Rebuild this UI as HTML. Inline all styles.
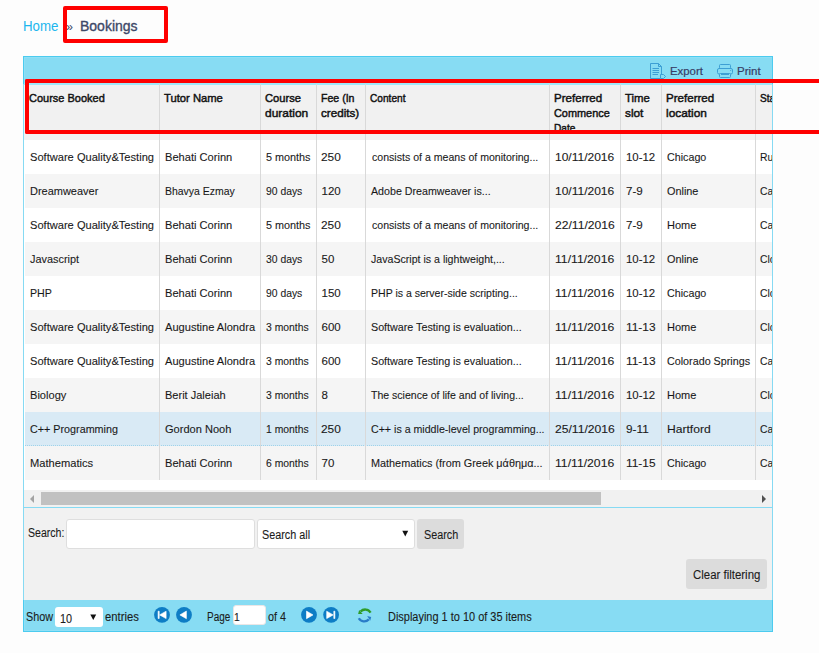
<!DOCTYPE html>
<html><head><meta charset="utf-8">
<style>
*{box-sizing:border-box;margin:0;padding:0}
html,body{width:819px;height:653px;overflow:hidden;background:#fdfdfd;font-family:"Liberation Sans",sans-serif;color:#1c1c1c;position:relative}
.a{position:absolute;white-space:nowrap}
.t{position:absolute;white-space:nowrap;transform-origin:0 0;-webkit-text-stroke:0.1px #111}
#rb1{left:63px;top:6px;width:105px;height:37px;border:4px solid #f00;border-radius:2px}
#grid{left:23px;top:56px;width:750px;height:576px;border:1px solid #86daf3;background:#f1f1f1}
#toolbar{left:23px;top:56px;width:750px;height:28px;background:#87dcf3;border:1px solid #4ccbef;border-bottom:none;box-shadow:inset 1px 1px 0 #8fe0f6}
#tbline{left:24px;top:83px;width:748px;height:2px;background:#9fe8fa}
#thead{left:24px;top:84px;width:748px;height:56px;background:#f1f1f1}
#tbody{left:24px;top:140px;width:748px;height:350px;background:#fff}
.row{position:absolute;left:25px;width:747px;height:34px}
.row.alt{background:#f5f5f5}
.row.sel{background:#d9eaf5;border-bottom:1px dotted #9fd3ea}
.vl{position:absolute;top:84px;width:1px;height:396px;background:#d9d9d9}
#clipR{left:773px;top:84px;width:46px;height:406px;background:#fdfdfd}
#rborder{left:772px;top:84px;width:1px;height:516px;background:#86daf3}
#rb2{left:25px;top:79px;width:820px;height:55px;border:4px solid #f00;border-right:none;border-radius:2px 0 0 2px}
#sbtrack{left:24px;top:490px;width:748px;height:17px;background:#f1f1f1}
#sbthumb{left:41px;top:492px;width:560px;height:13px;background:#c1c1c1}
#sbline{left:24px;top:507px;width:748px;height:1px;background:#86daf3}
.arrL{left:30px;top:495px;width:0;height:0;border-top:4px solid transparent;border-bottom:4px solid transparent;border-right:4px solid #a3a3a3}
.arrR{left:762px;top:495px;width:0;height:0;border-top:4px solid transparent;border-bottom:4px solid transparent;border-left:4px solid #505050}
#sinput{left:66px;top:519px;width:189px;height:30px;background:#fff;border:1px solid #dedede;border-radius:3px}
#ssel{left:257px;top:519px;width:158px;height:30px;background:#fff;border:1px solid #dedede;border-radius:3px}
#sbtn{left:417px;top:519px;width:47px;height:30px;background:#dcdcdc;border-radius:3px}
#cbtn{left:686px;top:559px;width:81px;height:30px;background:#dcdcdc;border-radius:3px}
#footer{left:23px;top:600px;width:750px;height:32px;background:#87dcf3;border:1px solid #4ccbef;border-top:none;box-shadow:inset 1px -1px 0 #8fe0f6}
#showsel{left:55px;top:607px;width:48px;height:20px;background:#fff;border-radius:3px}
#pginput{left:233px;top:605px;width:33px;height:20px;background:#fff;border:1px solid #ebe6e6;border-radius:3px}
</style></head><body>
<div class="t" style="left:23px;top:19px;font-size:14.5px;line-height:14.5px;color:#1cb6ee;-webkit-text-stroke:0;transform:scaleX(0.915)">Home</div>
<div class="t" style="left:66px;top:20px;font-size:12.5px;line-height:14px;color:#3b4a6b;-webkit-text-stroke:0">»</div>
<div class="t" style="left:80px;top:19px;font-size:14.5px;line-height:14.5px;color:#3d4868;-webkit-text-stroke:0.35px #3d4868;transform:scaleX(0.965)">Bookings</div>
<div id="rb1" class="a"></div>

<div id="grid" class="a"></div>
<div id="toolbar" class="a"></div>

<div class="t" style="left:670px;top:65px;font-size:11.5px;line-height:12px;color:#383d66;-webkit-text-stroke:0.2px #383d66;transform:scaleX(0.99)">Export</div>
<div class="t" style="left:737px;top:65px;font-size:11.5px;line-height:12px;color:#383d66;-webkit-text-stroke:0.2px #383d66;transform:scaleX(1.0)">Print</div>
<svg class="a" style="left:648px;top:62px" width="20" height="18" viewBox="0 0 20 18">
 <path d="M12 16.5 H2.5 V1.5 H10.5 L13.5 4.5 V12" fill="none" stroke="#3d9fd4" stroke-width="1"/>
 <path d="M10.5 1.5 V4.5 H13.5" fill="none" stroke="#3d9fd4" stroke-width="1"/>
 <path d="M4.5 6.5H11 M4.5 8.5H11 M4.5 10.5H11 M4.5 12.5H10" stroke="#3d9fd4" stroke-width="1"/>
 <path d="M12.5 12.5 H15.5 L17.5 14.5 L15.5 16.5 H12.5 Z" fill="#87dcf3" stroke="#3d9fd4" stroke-width="1"/>
</svg>
<svg class="a" style="left:716px;top:63px" width="18" height="16" viewBox="0 0 18 16">
 <rect x="3.5" y="1.5" width="11" height="4" rx="1" fill="none" stroke="#3d9fd4" stroke-width="1"/>
 <rect x="1.5" y="5.5" width="15" height="5.5" rx="1.5" fill="#87dcf3" stroke="#3d9fd4" stroke-width="1"/>
 <rect x="3.5" y="10.5" width="11" height="4" rx="1" fill="#87dcf3" stroke="#3d9fd4" stroke-width="1"/>
 <path d="M5 11.5H13" stroke="#3d9fd4" stroke-width="1"/>
 <circle cx="14.7" cy="7.5" r="0.6" fill="#3d9fd4"/>
</svg>

<div id="thead" class="a"></div>
<div id="tbline" class="a"></div>
<div id="tbody" class="a"></div>
<div class="vl" style="left:159px"></div>
<div class="vl" style="left:260px"></div>
<div class="vl" style="left:316px"></div>
<div class="vl" style="left:365px"></div>
<div class="vl" style="left:549px"></div>
<div class="vl" style="left:620px"></div>
<div class="vl" style="left:661px"></div>
<div class="vl" style="left:755px"></div>
<div class="row" style="top:140px"></div>
<div class="row alt" style="top:174px"></div>
<div class="row" style="top:208px"></div>
<div class="row alt" style="top:242px"></div>
<div class="row" style="top:276px"></div>
<div class="row alt" style="top:310px"></div>
<div class="row" style="top:344px"></div>
<div class="row alt" style="top:378px"></div>
<div class="row sel" style="top:412px"></div>
<div class="row alt" style="top:446px"></div>
<div class="vl" style="left:159px"></div>
<div class="vl" style="left:260px"></div>
<div class="vl" style="left:316px"></div>
<div class="vl" style="left:365px"></div>
<div class="vl" style="left:549px"></div>
<div class="vl" style="left:620px"></div>
<div class="vl" style="left:661px"></div>
<div class="vl" style="left:755px"></div>
<div class="t" style="left:29.82px;top:151px;font-size:11.5px;line-height:12px;transform:scaleX(0.9650);-webkit-text-stroke:0.1px #111">Software Quality&amp;Testing</div>
<div class="t" style="left:164.62px;top:151px;font-size:11.5px;line-height:12px;transform:scaleX(0.9651);-webkit-text-stroke:0.1px #111">Behati Corinn</div>
<div class="t" style="left:265.94px;top:151px;font-size:11.5px;line-height:12px;transform:scaleX(0.9415);-webkit-text-stroke:0.1px #111">5 months</div>
<div class="t" style="left:321.48px;top:151px;font-size:11.5px;line-height:12px;transform:scaleX(1.0322);-webkit-text-stroke:0.1px #111">250</div>
<div class="t" style="left:372.25px;top:151px;font-size:11.5px;line-height:12px;transform:scaleX(0.9194);-webkit-text-stroke:0.1px #111">consists of a means of monitoring...</div>
<div class="t" style="left:554.87px;top:151px;font-size:11.5px;line-height:12px;transform:scaleX(1.0434);-webkit-text-stroke:0.1px #111">10/11/2016</div>
<div class="t" style="left:626.20px;top:151px;font-size:11.5px;line-height:12px;transform:scaleX(0.9918);-webkit-text-stroke:0.1px #111">10-12</div>
<div class="t" style="left:666.64px;top:151px;font-size:11.5px;line-height:12px;transform:scaleX(0.9314);-webkit-text-stroke:0.1px #111">Chicago</div>
<div class="t" style="left:760.26px;top:151px;font-size:11.5px;line-height:12px;transform:scaleX(0.9000);-webkit-text-stroke:0.1px #111">Running</div>
<div class="t" style="left:29.83px;top:185px;font-size:11.5px;line-height:12px;transform:scaleX(0.9546);-webkit-text-stroke:0.1px #111">Dreamweaver</div>
<div class="t" style="left:164.65px;top:185px;font-size:11.5px;line-height:12px;transform:scaleX(0.9100);-webkit-text-stroke:0.1px #111">Bhavya Ezmay</div>
<div class="t" style="left:265.96px;top:185px;font-size:11.5px;line-height:12px;transform:scaleX(0.9000);-webkit-text-stroke:0.1px #111">90 days</div>
<div class="t" style="left:321.50px;top:185px;font-size:11.5px;line-height:12px;transform:scaleX(1.0000);-webkit-text-stroke:0.1px #111">120</div>
<div class="t" style="left:370.74px;top:185px;font-size:11.5px;line-height:12px;transform:scaleX(0.9267);-webkit-text-stroke:0.1px #111">Adobe Dreamweaver is...</div>
<div class="t" style="left:554.87px;top:185px;font-size:11.5px;line-height:12px;transform:scaleX(1.0434);-webkit-text-stroke:0.1px #111">10/11/2016</div>
<div class="t" style="left:626.19px;top:185px;font-size:11.5px;line-height:12px;transform:scaleX(1.0095);-webkit-text-stroke:0.1px #111">7-9</div>
<div class="t" style="left:666.63px;top:185px;font-size:11.5px;line-height:12px;transform:scaleX(0.9450);-webkit-text-stroke:0.1px #111">Online</div>
<div class="t" style="left:760.26px;top:185px;font-size:11.5px;line-height:12px;transform:scaleX(0.9000);-webkit-text-stroke:0.1px #111">Cancelled</div>
<div class="t" style="left:29.82px;top:219px;font-size:11.5px;line-height:12px;transform:scaleX(0.9650);-webkit-text-stroke:0.1px #111">Software Quality&amp;Testing</div>
<div class="t" style="left:164.62px;top:219px;font-size:11.5px;line-height:12px;transform:scaleX(0.9651);-webkit-text-stroke:0.1px #111">Behati Corinn</div>
<div class="t" style="left:265.94px;top:219px;font-size:11.5px;line-height:12px;transform:scaleX(0.9415);-webkit-text-stroke:0.1px #111">5 months</div>
<div class="t" style="left:321.48px;top:219px;font-size:11.5px;line-height:12px;transform:scaleX(1.0322);-webkit-text-stroke:0.1px #111">250</div>
<div class="t" style="left:372.25px;top:219px;font-size:11.5px;line-height:12px;transform:scaleX(0.9194);-webkit-text-stroke:0.1px #111">consists of a means of monitoring...</div>
<div class="t" style="left:554.87px;top:219px;font-size:11.5px;line-height:12px;transform:scaleX(1.0524);-webkit-text-stroke:0.1px #111">22/11/2016</div>
<div class="t" style="left:626.19px;top:219px;font-size:11.5px;line-height:12px;transform:scaleX(1.0095);-webkit-text-stroke:0.1px #111">7-9</div>
<div class="t" style="left:666.63px;top:219px;font-size:11.5px;line-height:12px;transform:scaleX(0.9558);-webkit-text-stroke:0.1px #111">Home</div>
<div class="t" style="left:760.26px;top:219px;font-size:11.5px;line-height:12px;transform:scaleX(0.9000);-webkit-text-stroke:0.1px #111">Cancelled</div>
<div class="t" style="left:29.83px;top:253px;font-size:11.5px;line-height:12px;transform:scaleX(0.9470);-webkit-text-stroke:0.1px #111">Javascript</div>
<div class="t" style="left:164.62px;top:253px;font-size:11.5px;line-height:12px;transform:scaleX(0.9651);-webkit-text-stroke:0.1px #111">Behati Corinn</div>
<div class="t" style="left:265.96px;top:253px;font-size:11.5px;line-height:12px;transform:scaleX(0.9000);-webkit-text-stroke:0.1px #111">30 days</div>
<div class="t" style="left:321.50px;top:253px;font-size:11.5px;line-height:12px;transform:scaleX(1.0000);-webkit-text-stroke:0.1px #111">50</div>
<div class="t" style="left:370.75px;top:253px;font-size:11.5px;line-height:12px;transform:scaleX(0.9219);-webkit-text-stroke:0.1px #111">JavaScript is a lightweight,...</div>
<div class="t" style="left:554.86px;top:253px;font-size:11.5px;line-height:12px;transform:scaleX(1.0598);-webkit-text-stroke:0.1px #111">11/11/2016</div>
<div class="t" style="left:626.20px;top:253px;font-size:11.5px;line-height:12px;transform:scaleX(0.9918);-webkit-text-stroke:0.1px #111">10-12</div>
<div class="t" style="left:666.63px;top:253px;font-size:11.5px;line-height:12px;transform:scaleX(0.9450);-webkit-text-stroke:0.1px #111">Online</div>
<div class="t" style="left:760.26px;top:253px;font-size:11.5px;line-height:12px;transform:scaleX(0.9000);-webkit-text-stroke:0.1px #111">Closed</div>
<div class="t" style="left:29.84px;top:287px;font-size:11.5px;line-height:12px;transform:scaleX(0.9252);-webkit-text-stroke:0.1px #111">PHP</div>
<div class="t" style="left:164.62px;top:287px;font-size:11.5px;line-height:12px;transform:scaleX(0.9651);-webkit-text-stroke:0.1px #111">Behati Corinn</div>
<div class="t" style="left:265.96px;top:287px;font-size:11.5px;line-height:12px;transform:scaleX(0.9000);-webkit-text-stroke:0.1px #111">90 days</div>
<div class="t" style="left:321.50px;top:287px;font-size:11.5px;line-height:12px;transform:scaleX(1.0000);-webkit-text-stroke:0.1px #111">150</div>
<div class="t" style="left:370.75px;top:287px;font-size:11.5px;line-height:12px;transform:scaleX(0.9159);-webkit-text-stroke:0.1px #111">PHP is a server-side scripting...</div>
<div class="t" style="left:554.86px;top:287px;font-size:11.5px;line-height:12px;transform:scaleX(1.0598);-webkit-text-stroke:0.1px #111">11/11/2016</div>
<div class="t" style="left:626.20px;top:287px;font-size:11.5px;line-height:12px;transform:scaleX(0.9918);-webkit-text-stroke:0.1px #111">10-12</div>
<div class="t" style="left:666.64px;top:287px;font-size:11.5px;line-height:12px;transform:scaleX(0.9314);-webkit-text-stroke:0.1px #111">Chicago</div>
<div class="t" style="left:760.26px;top:287px;font-size:11.5px;line-height:12px;transform:scaleX(0.9000);-webkit-text-stroke:0.1px #111">Closed</div>
<div class="t" style="left:29.82px;top:321px;font-size:11.5px;line-height:12px;transform:scaleX(0.9650);-webkit-text-stroke:0.1px #111">Software Quality&amp;Testing</div>
<div class="t" style="left:164.62px;top:321px;font-size:11.5px;line-height:12px;transform:scaleX(0.9649);-webkit-text-stroke:0.1px #111">Augustine Alondra</div>
<div class="t" style="left:265.96px;top:321px;font-size:11.5px;line-height:12px;transform:scaleX(0.9000);-webkit-text-stroke:0.1px #111">3 months</div>
<div class="t" style="left:321.50px;top:321px;font-size:11.5px;line-height:12px;transform:scaleX(1.0000);-webkit-text-stroke:0.1px #111">600</div>
<div class="t" style="left:370.74px;top:321px;font-size:11.5px;line-height:12px;transform:scaleX(0.9329);-webkit-text-stroke:0.1px #111">Software Testing is evaluation...</div>
<div class="t" style="left:554.86px;top:321px;font-size:11.5px;line-height:12px;transform:scaleX(1.0598);-webkit-text-stroke:0.1px #111">11/11/2016</div>
<div class="t" style="left:626.18px;top:321px;font-size:11.5px;line-height:12px;transform:scaleX(1.0336);-webkit-text-stroke:0.1px #111">11-13</div>
<div class="t" style="left:666.63px;top:321px;font-size:11.5px;line-height:12px;transform:scaleX(0.9558);-webkit-text-stroke:0.1px #111">Home</div>
<div class="t" style="left:760.26px;top:321px;font-size:11.5px;line-height:12px;transform:scaleX(0.9000);-webkit-text-stroke:0.1px #111">Closed</div>
<div class="t" style="left:29.82px;top:355px;font-size:11.5px;line-height:12px;transform:scaleX(0.9650);-webkit-text-stroke:0.1px #111">Software Quality&amp;Testing</div>
<div class="t" style="left:164.62px;top:355px;font-size:11.5px;line-height:12px;transform:scaleX(0.9649);-webkit-text-stroke:0.1px #111">Augustine Alondra</div>
<div class="t" style="left:265.96px;top:355px;font-size:11.5px;line-height:12px;transform:scaleX(0.9000);-webkit-text-stroke:0.1px #111">3 months</div>
<div class="t" style="left:321.50px;top:355px;font-size:11.5px;line-height:12px;transform:scaleX(1.0000);-webkit-text-stroke:0.1px #111">600</div>
<div class="t" style="left:370.74px;top:355px;font-size:11.5px;line-height:12px;transform:scaleX(0.9329);-webkit-text-stroke:0.1px #111">Software Testing is evaluation...</div>
<div class="t" style="left:554.86px;top:355px;font-size:11.5px;line-height:12px;transform:scaleX(1.0598);-webkit-text-stroke:0.1px #111">11/11/2016</div>
<div class="t" style="left:626.18px;top:355px;font-size:11.5px;line-height:12px;transform:scaleX(1.0336);-webkit-text-stroke:0.1px #111">11-13</div>
<div class="t" style="left:666.64px;top:355px;font-size:11.5px;line-height:12px;transform:scaleX(0.9343);-webkit-text-stroke:0.1px #111">Colorado Springs</div>
<div class="t" style="left:760.26px;top:355px;font-size:11.5px;line-height:12px;transform:scaleX(0.9000);-webkit-text-stroke:0.1px #111">Cancelled</div>
<div class="t" style="left:29.82px;top:389px;font-size:11.5px;line-height:12px;transform:scaleX(0.9630);-webkit-text-stroke:0.1px #111">Biology</div>
<div class="t" style="left:164.63px;top:389px;font-size:11.5px;line-height:12px;transform:scaleX(0.9582);-webkit-text-stroke:0.1px #111">Berit Jaleiah</div>
<div class="t" style="left:265.96px;top:389px;font-size:11.5px;line-height:12px;transform:scaleX(0.9000);-webkit-text-stroke:0.1px #111">3 months</div>
<div class="t" style="left:321.50px;top:389px;font-size:11.5px;line-height:12px;transform:scaleX(1.0000);-webkit-text-stroke:0.1px #111">8</div>
<div class="t" style="left:370.75px;top:389px;font-size:11.5px;line-height:12px;transform:scaleX(0.9157);-webkit-text-stroke:0.1px #111">The science of life and of living...</div>
<div class="t" style="left:554.86px;top:389px;font-size:11.5px;line-height:12px;transform:scaleX(1.0598);-webkit-text-stroke:0.1px #111">11/11/2016</div>
<div class="t" style="left:626.20px;top:389px;font-size:11.5px;line-height:12px;transform:scaleX(0.9918);-webkit-text-stroke:0.1px #111">10-12</div>
<div class="t" style="left:666.63px;top:389px;font-size:11.5px;line-height:12px;transform:scaleX(0.9558);-webkit-text-stroke:0.1px #111">Home</div>
<div class="t" style="left:760.26px;top:389px;font-size:11.5px;line-height:12px;transform:scaleX(0.9000);-webkit-text-stroke:0.1px #111">Closed</div>
<div class="t" style="left:29.84px;top:423px;font-size:11.5px;line-height:12px;transform:scaleX(0.9357);-webkit-text-stroke:0.1px #111">C++ Programming</div>
<div class="t" style="left:164.62px;top:423px;font-size:11.5px;line-height:12px;transform:scaleX(0.9612);-webkit-text-stroke:0.1px #111">Gordon Nooh</div>
<div class="t" style="left:265.96px;top:423px;font-size:11.5px;line-height:12px;transform:scaleX(0.9000);-webkit-text-stroke:0.1px #111">1 months</div>
<div class="t" style="left:321.48px;top:423px;font-size:11.5px;line-height:12px;transform:scaleX(1.0322);-webkit-text-stroke:0.1px #111">250</div>
<div class="t" style="left:370.75px;top:423px;font-size:11.5px;line-height:12px;transform:scaleX(0.9236);-webkit-text-stroke:0.1px #111">C++ is a middle-level programming...</div>
<div class="t" style="left:554.87px;top:423px;font-size:11.5px;line-height:12px;transform:scaleX(1.0524);-webkit-text-stroke:0.1px #111">25/11/2016</div>
<div class="t" style="left:626.19px;top:423px;font-size:11.5px;line-height:12px;transform:scaleX(1.0244);-webkit-text-stroke:0.1px #111">9-11</div>
<div class="t" style="left:666.57px;top:423px;font-size:11.5px;line-height:12px;transform:scaleX(1.0528);-webkit-text-stroke:0.1px #111">Hartford</div>
<div class="t" style="left:760.26px;top:423px;font-size:11.5px;line-height:12px;transform:scaleX(0.9000);-webkit-text-stroke:0.1px #111">Cancelled</div>
<div class="t" style="left:29.82px;top:457px;font-size:11.5px;line-height:12px;transform:scaleX(0.9689);-webkit-text-stroke:0.1px #111">Mathematics</div>
<div class="t" style="left:164.62px;top:457px;font-size:11.5px;line-height:12px;transform:scaleX(0.9651);-webkit-text-stroke:0.1px #111">Behati Corinn</div>
<div class="t" style="left:265.96px;top:457px;font-size:11.5px;line-height:12px;transform:scaleX(0.9000);-webkit-text-stroke:0.1px #111">6 months</div>
<div class="t" style="left:321.50px;top:457px;font-size:11.5px;line-height:12px;transform:scaleX(1.0000);-webkit-text-stroke:0.1px #111">70</div>
<div class="t" style="left:370.73px;top:457px;font-size:11.5px;line-height:12px;transform:scaleX(0.9432);-webkit-text-stroke:0.1px #111">Mathematics (from Greek μάθημα...</div>
<div class="t" style="left:554.86px;top:457px;font-size:11.5px;line-height:12px;transform:scaleX(1.0598);-webkit-text-stroke:0.1px #111">11/11/2016</div>
<div class="t" style="left:626.18px;top:457px;font-size:11.5px;line-height:12px;transform:scaleX(1.0336);-webkit-text-stroke:0.1px #111">11-15</div>
<div class="t" style="left:666.64px;top:457px;font-size:11.5px;line-height:12px;transform:scaleX(0.9314);-webkit-text-stroke:0.1px #111">Chicago</div>
<div class="t" style="left:760.26px;top:457px;font-size:11.5px;line-height:12px;transform:scaleX(0.9000);-webkit-text-stroke:0.1px #111">Cancelled</div>
<div class="t" style="left:29.03px;top:92px;font-size:11.5px;line-height:12px;transform:scaleX(0.9556);-webkit-text-stroke:0.45px #111;color:#111">Course Booked</div>
<div class="t" style="left:163.81px;top:92px;font-size:11.5px;line-height:12px;transform:scaleX(0.9763);-webkit-text-stroke:0.45px #111;color:#111">Tutor Name</div>
<div class="t" style="left:265.12px;top:92px;font-size:11.5px;line-height:12px;transform:scaleX(0.9694);-webkit-text-stroke:0.45px #111;color:#111">Course</div>
<div class="t" style="left:265.08px;top:107px;font-size:11.5px;line-height:12px;transform:scaleX(1.0401);-webkit-text-stroke:0.45px #111;color:#111">duration</div>
<div class="t" style="left:320.75px;top:92px;font-size:11.5px;line-height:12px;transform:scaleX(0.9197);-webkit-text-stroke:0.45px #111;color:#111">Fee (In</div>
<div class="t" style="left:320.69px;top:107px;font-size:11.5px;line-height:12px;transform:scaleX(1.0128);-webkit-text-stroke:0.45px #111;color:#111">credits)</div>
<div class="t" style="left:369.97px;top:92px;font-size:11.5px;line-height:12px;transform:scaleX(0.8800);-webkit-text-stroke:0.45px #111;color:#111">Content</div>
<div class="t" style="left:554.10px;top:92px;font-size:11.5px;line-height:12px;transform:scaleX(1.0054);-webkit-text-stroke:0.45px #111;color:#111">Preferred</div>
<div class="t" style="left:554.13px;top:107px;font-size:11.5px;line-height:12px;transform:scaleX(0.9477);-webkit-text-stroke:0.45px #111;color:#111">Commence</div>
<div class="t" style="left:554.17px;top:122px;font-size:11.5px;line-height:12px;transform:scaleX(0.8800);-webkit-text-stroke:0.45px #111;color:#111">Date</div>
<div class="t" style="left:625.41px;top:92px;font-size:11.5px;line-height:12px;transform:scaleX(0.9883);-webkit-text-stroke:0.45px #111;color:#111">Time</div>
<div class="t" style="left:625.38px;top:107px;font-size:11.5px;line-height:12px;transform:scaleX(1.0276);-webkit-text-stroke:0.45px #111;color:#111">slot</div>
<div class="t" style="left:665.80px;top:92px;font-size:11.5px;line-height:12px;transform:scaleX(1.0054);-webkit-text-stroke:0.45px #111;color:#111">Preferred</div>
<div class="t" style="left:665.78px;top:107px;font-size:11.5px;line-height:12px;transform:scaleX(1.0319);-webkit-text-stroke:0.45px #111;color:#111">location</div>
<div class="t" style="left:760.47px;top:92px;font-size:11.5px;line-height:12px;transform:scaleX(0.8800);-webkit-text-stroke:0.45px #111;color:#111">Status</div>
<div id="clipR" class="a"></div>
<div id="rborder" class="a"></div>

<div id="sbtrack" class="a"></div>
<div id="sbthumb" class="a"></div>
<div class="a arrL"></div>
<div class="a arrR"></div>
<div id="sbline" class="a"></div>

<div class="t" style="left:28.3px;top:527px;font-size:12px;line-height:12px;transform:scaleX(0.88)">Search:</div>
<div id="sinput" class="a"></div>
<div id="ssel" class="a"></div>
<div class="t" style="left:261.5px;top:529px;font-size:12px;line-height:12px;transform:scaleX(0.9)">Search all</div>
<svg class="a" style="left:402px;top:530px" width="7" height="7" viewBox="0 0 7 7"><path d="M0.3 0.8 H6.2 L3.25 6.6 Z" fill="#111"/></svg>
<div id="sbtn" class="a"></div>
<div class="t" style="left:424px;top:529px;font-size:12px;line-height:12px;transform:scaleX(0.9)">Search</div>
<div id="cbtn" class="a"></div>
<div class="t" style="left:693px;top:569px;font-size:12px;line-height:12px;transform:scaleX(0.953)">Clear filtering</div>

<div id="footer" class="a"></div>
<div class="t" style="left:25.8px;top:611px;font-size:12px;line-height:12px;transform:scaleX(0.9)">Show</div>
<div id="showsel" class="a"></div>
<div class="t" style="left:60px;top:613px;font-size:12px;line-height:12px;transform:scaleX(0.9)">10</div>
<svg class="a" style="left:89.5px;top:613.5px" width="7" height="7" viewBox="0 0 7 7"><path d="M0.3 0.6 H6.2 L3.25 6 Z" fill="#111"/></svg>
<div class="t" style="left:105.3px;top:611px;font-size:12px;line-height:12px;transform:scaleX(0.94)">entries</div>


<svg class="a" style="left:140px;top:600px" width="210" height="30" viewBox="140 600 210 30">
 <g fill="#0e7dc5">
 <circle cx="162" cy="614.8" r="7.9"/><circle cx="184" cy="614.8" r="7.9"/>
 <circle cx="309" cy="614.8" r="7.9"/><circle cx="331.1" cy="614.8" r="7.9"/>
 </g>
 <g fill="#fff" stroke="#fff" stroke-width="0.6" stroke-linejoin="round">
 <rect x="158.1" y="611.2" width="1.1" height="7.3"/><path d="M159.6 614.9 L166.1 611.2 V618.6 Z"/>
 <path d="M179.9 614.9 L186.4 611.1 V618.7 Z"/>
 <path d="M313 614.9 L306.5 611.1 V618.7 Z"/>
 <path d="M333.2 614.9 L326.7 611.2 V618.6 Z"/><rect x="333.8" y="611.2" width="1.1" height="7.3"/>
 </g>
</svg>
<div class="t" style="left:206.5px;top:611px;font-size:12px;line-height:12px;transform:scaleX(0.83)">Page</div>
<div id="pginput" class="a"></div>
<div class="t" style="left:234.3px;top:611px;font-size:11.5px;line-height:12px;transform:scaleX(0.9)">1</div>
<div class="t" style="left:268px;top:611px;font-size:12px;line-height:12px;transform:scaleX(0.9)">of 4</div>


<svg class="a" style="left:352px;top:603px" width="26" height="25" viewBox="0 0 26 25">
 <path d="M18.6 9.6 A6.2 6.2 0 0 0 8.6 8.6" fill="none" stroke="#2f9c2a" stroke-width="2.3"/>
 <path d="M6.1 10.9 L7.1 6.9 L10.6 11.1 Z" fill="#2f9c2a"/>
 <path d="M6.8 15.2 A6.2 6.2 0 0 0 16.8 16.4" fill="none" stroke="#2a7cc8" stroke-width="2.3"/>
 <path d="M15.2 13 L19.2 14 L18.2 17.8 Z" fill="#2a7cc8"/>
</svg>
<div class="t" style="left:387.7px;top:611px;font-size:12px;line-height:12px;transform:scaleX(0.913)">Displaying 1 to 10 of 35 items</div>

<div id="rb2" class="a"></div>
</body></html>
